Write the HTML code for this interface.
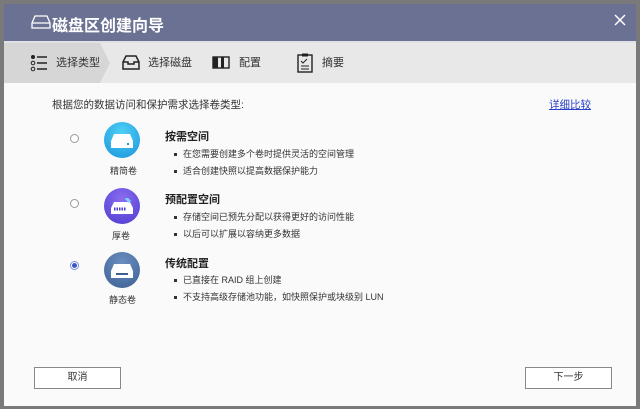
<!DOCTYPE html>
<html><head><meta charset="utf-8"><style>
*{margin:0;padding:0;box-sizing:border-box}
body{width:640px;height:409px;background:#7a7a7a;font-family:"Liberation Sans","Noto Sans CJK SC",sans-serif;position:relative;overflow:hidden}
.dlg{position:absolute;left:4px;top:4px;width:632px;height:402px;background:#fafafa}
.hd{position:absolute;left:0;top:0;width:632px;height:37px;background:#6b7192;color:#fff;font-size:16px;font-weight:bold}
.hd .t{position:absolute;left:48px;top:8px}
.tabs{position:absolute;left:0;top:37px;width:632px;height:42px;background:#e8e8e8;border-top:2px solid #dfe1e6}
.tab{position:absolute;top:0;height:40px;line-height:40px;font-size:11px;color:#333}
.abs{position:absolute}
.txt{position:absolute;font-size:9px;color:#333;white-space:nowrap}
.b{font-weight:bold;font-size:11px;color:#222}
.li::before{content:"";display:inline-block;width:3px;height:3px;background:#333;margin-right:6px;vertical-align:middle}
.radio{position:absolute;width:9px;height:9px;border:1px solid #999;border-radius:50%;background:#fff}
.btn{position:absolute;width:87px;height:22px;border:1px solid #888;background:#fff;font-size:10px;text-align:center;line-height:20px;color:#333}
.ic{position:absolute;width:36px;height:36px;border-radius:50%}
</style></head><body>
<div class="dlg">
<div class="hd">
<svg class="abs" style="left:27px;top:10px" width="20" height="16" viewBox="0 0 20 16"><path d="M4 2h12l3 7v5H1V9z" fill="none" stroke="#fff" stroke-width="1.3"/><line x1="1" y1="9" x2="19" y2="9" stroke="#fff" stroke-width="1.3"/></svg>
<span class="t">磁盘区创建向导</span>
<svg class="abs" style="left:610px;top:10px" width="12" height="12"><path d="M1 1L11 11M11 1L1 11" stroke="#fff" stroke-width="1.5"/></svg>
</div>
<div class="tabs">
<svg class="abs" style="left:0;top:0" width="106" height="40"><polygon points="0,0 96,0 106,20 96,40 0,40" fill="#d6d6d6"/></svg>
<svg class="abs" style="left:26px;top:11px" width="18" height="18" viewBox="0 0 18 18"><circle cx="3" cy="3" r="2" fill="#222"/><circle cx="3" cy="9" r="1.8" fill="none" stroke="#222"/><circle cx="3" cy="15" r="1.8" fill="none" stroke="#222"/><path d="M7 3h10M7 9h10M7 15h10" stroke="#222" stroke-width="1.4"/></svg>
<div class="tab" style="left:52px">选择类型</div>
<svg class="abs" style="left:118px;top:12px" width="18" height="15" viewBox="0 0 18 15"><path d="M4 1h10l3 6v7H1V7z" fill="none" stroke="#222" stroke-width="1.5"/><path d="M1 7h5v2h6V7h5" fill="none" stroke="#222" stroke-width="1.5"/></svg>
<div class="tab" style="left:144px">选择磁盘</div>
<svg class="abs" style="left:208px;top:13px" width="18" height="13" viewBox="0 0 18 13"><rect x="1" y="1" width="16" height="11" fill="none" stroke="#222" stroke-width="1.4"/><rect x="1" y="1" width="5" height="11" fill="#222"/><rect x="9" y="1" width="3" height="11" fill="#222"/></svg>
<div class="tab" style="left:235px">配置</div>
<svg class="abs" style="left:293px;top:10px" width="16" height="20" viewBox="0 0 16 20"><rect x="1" y="2" width="14" height="17" fill="none" stroke="#222" stroke-width="1.4"/><rect x="5" y="0.5" width="6" height="3" fill="#222"/><path d="M4 8l2 2 4-4M4 13h8M4 16h8" stroke="#222" fill="none"/></svg>
<div class="tab" style="left:318px">摘要</div>
</div>
<div class="txt" style="left:48px;top:93px;font-size:10.5px">根据您的数据访问和保护需求选择卷类型:</div>
<div class="txt" style="left:545px;top:93px;color:#2a3fc7;text-decoration:underline;font-size:10.5px">详细比较</div>

<div class="radio" style="left:66px;top:130px"></div>
<div class="ic" style="left:100px;top:118px;background:radial-gradient(circle at 50% 30%,#4fd0f5,#1a95dc)"></div>
<svg class="abs" style="left:106px;top:128px" width="24" height="18"><path d="M4 2h16l3 7v7H1V9z" fill="#fff"/><rect x="17" y="11" width="2" height="2" fill="#1a95dc"/></svg>
<div class="txt" style="left:106px;top:160px;font-size:9px">精简卷</div>
<div class="txt b" style="left:161px;top:124px">按需空间</div>
<div class="txt li" style="left:170px;top:143px">在您需要创建多个卷时提供灵活的空间管理</div>
<div class="txt li" style="left:170px;top:160px">适合创建快照以提高数据保护能力</div>

<div class="radio" style="left:66px;top:195px"></div>
<div class="ic" style="left:100px;top:184px;background:radial-gradient(circle at 50% 30%,#8c6df0,#4b3bd0)"></div>
<svg class="abs" style="left:106px;top:194px" width="24" height="18"><path d="M4 4h16l3 6v6H1V10z" fill="#fff"/><path d="M4 11h12" stroke="#4b3bd0" stroke-width="3" stroke-dasharray="1.5 1"/><path d="M16 0l4 4" stroke="#7fd0ff" stroke-width="3"/></svg>
<div class="txt" style="left:108px;top:225px;font-size:9px">厚卷</div>
<div class="txt b" style="left:161px;top:187px">预配置空间</div>
<div class="txt li" style="left:170px;top:206px">存储空间已预先分配以获得更好的访问性能</div>
<div class="txt li" style="left:170px;top:223px">以后可以扩展以容纳更多数据</div>

<div class="radio" style="left:66px;top:257px;border-color:#7c8bd8"><div style="width:5px;height:5px;border-radius:50%;background:#3a57c9;margin:1px"></div></div>
<div class="ic" style="left:100px;top:248px;background:radial-gradient(circle at 50% 30%,#6a8fc0,#3d5f92)"></div>
<svg class="abs" style="left:106px;top:258px" width="24" height="18"><path d="M4 2h16l3 7v7H1V9z" fill="#fff"/><rect x="6" y="11" width="12" height="2" fill="#3d5f92"/></svg>
<div class="txt" style="left:105px;top:289px;font-size:9px">静态卷</div>
<div class="txt b" style="left:161px;top:251px">传统配置</div>
<div class="txt li" style="left:170px;top:269px">已直接在 RAID 组上创建</div>
<div class="txt li" style="left:170px;top:286px">不支持高级存储池功能，如快照保护或块级别 LUN</div>

<div class="btn" style="left:30px;top:363px">取消</div>
<div class="btn" style="left:521px;top:363px">下一步</div>
</div>
</body></html>
